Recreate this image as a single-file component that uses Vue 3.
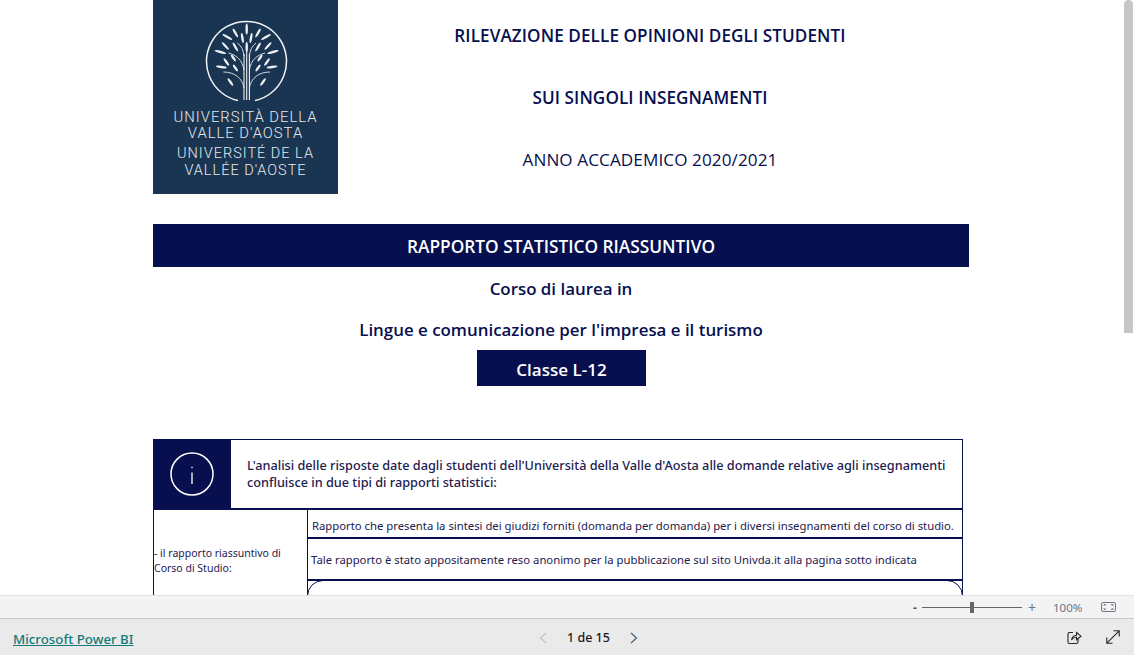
<template>
  <div class="app">
    <div class="viewport">
      <div class="report">
        <header class="top">
          <div class="logo">
            <svg class="tree" viewBox="0 0 185 110" width="185" height="110">
              <path d="M85 100.5A40 40 0 1 1 102 100.5" fill="none" stroke="#f1f3f5" stroke-width="1.5" />
              <path d="M91 100V54M93.7 100V46M96.4 100V54" stroke="#f1f3f5" stroke-width="1.1" fill="none" />
              <path v-for="b in branches" :key="b" :d="b" stroke="#e6eaee" stroke-width="0.9" fill="none" />
              <ellipse v-for="(l, i) in leaves" :key="i" :cx="l.x" :cy="l.y" rx="1.2" :ry="l.r"
                :transform="`rotate(${l.a} ${l.x} ${l.y})`" fill="#eef1f4" />
            </svg>
            <div class="logo-text">
              <div class="it">UNIVERSITÀ DELLA<br>VALLE D'AOSTA</div>
              <div class="fr">UNIVERSITÉ DE LA<br>VALLÉE D'AOSTE</div>
            </div>
          </div>
          <div class="titles">
            <div class="strong">RILEVAZIONE DELLE OPINIONI DEGLI STUDENTI</div>
            <div class="strong">SUI SINGOLI INSEGNAMENTI</div>
            <div>ANNO ACCADEMICO 2020/2021</div>
          </div>
        </header>

        <div class="banner">RAPPORTO STATISTICO RIASSUNTIVO</div>
        <div class="course">Corso di laurea in</div>
        <div class="course second">Lingue e comunicazione per l'impresa e il turismo</div>
        <div class="classe">Classe L-12</div>

        <section class="info">
          <div class="info-icon">
            <svg width="44" height="44" viewBox="0 0 44 44" fill="none" stroke="#fff">
              <circle cx="22" cy="22" r="21" stroke-width="1.5" />
              <path d="M22 20.5V32" stroke-width="1.3" />
              <circle cx="22" cy="15.5" r="0.8" fill="#fff" stroke="none" />
            </svg>
          </div>
          <p>L'analisi delle risposte date dagli studenti dell'Università della Valle d'Aosta alle domande relative agli insegnamenti confluisce in due tipi di rapporti statistici:</p>
        </section>

        <section class="details">
          <div class="label">- il rapporto riassuntivo di Corso di Studio:</div>
          <div class="rows">
            <div class="row one">Rapporto che presenta la sintesi dei giudizi forniti (domanda per domanda) per i diversi insegnamenti del corso di studio.</div>
            <div class="row two">Tale rapporto è stato appositamente reso anonimo per la pubblicazione sul sito Univda.it alla pagina sotto indicata</div>
            <div class="link-box"></div>
          </div>
        </section>
      </div>
      <div class="scrollbar"><div class="thumb"></div></div>
    </div>

    <div class="zoombar">
      <span class="minus">-</span>
      <div class="slider"><span class="knob"></span></div>
      <span class="plus">+</span>
      <span class="pct">100%</span>
      <svg class="fit" width="15" height="12" viewBox="0 0 15 12" fill="none" stroke="#6d7682">
        <rect x="0.5" y="1.5" width="14" height="9" rx="1.5" />
        <path d="M3 5V3.7H5M10 3.7H12V5M3 7V8.3H5M10 8.3H12V7" />
      </svg>
    </div>

    <footer class="footer">
      <a class="pbi" href="#">Microsoft Power BI</a>
      <div class="pager">
        <svg width="8" height="12" viewBox="0 0 8 12" fill="none" stroke="#c4c4c4" stroke-width="1.2"><path d="M7 1L1.5 6L7 11" /></svg>
        <span>1 de 15</span>
        <svg width="8" height="12" viewBox="0 0 8 12" fill="none" stroke="#3f5f7f" stroke-width="1.2"><path d="M1 1L6.5 6L1 11" /></svg>
      </div>
      <div class="actions">
        <svg width="15" height="15" viewBox="0 0 15 15" fill="none" stroke="#252525" stroke-width="1.1">
          <path d="M6 2.5H2.5A1.5 1.5 0 0 0 1 4V12A1.5 1.5 0 0 0 2.5 13.5H9.5A1.5 1.5 0 0 0 11 12V9" />
          <path d="M4.5 10C5 7 7 5.5 9.5 5.3V2.5L14 6.2L9.5 9.8V7.3C7.5 7.3 5.8 8.2 4.5 10Z" />
        </svg>
        <svg width="14" height="14" viewBox="0 0 14 14" fill="none" stroke="#252525" stroke-width="1.1">
          <path d="M0.8 13.2L13.2 0.8M7.5 0.8H13.2V6.5M0.8 7.5V13.2H6.5" />
        </svg>
      </div>
    </footer>
  </div>
</template>

<script setup>
// half of the tree's leaves, the other side is mirrored around the trunk
const half = [
  [93.7, 29, 0, 5.5],
  [93.7, 47, 0, 5],
  [98, 38, 10, 5],
  [105, 33, 30, 5],
  [113, 37, 60, 5.5],
  [105, 47, 30, 5],
  [115, 46, 42, 5],
  [120, 52, 75, 6],
  [107, 58, 35, 4],
  [114, 62, 35, 4.5],
  [119, 67, 82, 5.5],
  [105, 68, 35, 4],
  [110, 82, 35, 4.5]
]

const leaves = half.flatMap(([x, y, a, r]) =>
  x === 93.7 ? [{ x, y, a, r }] : [{ x, y, a, r }, { x: 187.4 - x, y, a: -a, r }]
)

const branches = [
  'M96.4 70C98 60 104 55 112 53',
  'M91 70C89.4 60 83.4 55 75.4 53',
  'M96.4 88C98 78 106 72 117 72',
  'M91 88C89.4 78 81.4 72 70.4 72',
  'M96.4 56C97 50 99 46 103 43',
  'M91 56C90.4 50 88.4 46 84.4 43'
]
</script>

<style>
html, body { margin: 0; overflow: hidden; }
</style>

<style scoped>
.app { width: 1134px; height: 655px; display: flex; flex-direction: column; font-family: "Noto Sans", "Open Sans", sans-serif; background: #fff; color: #070f4f; }
.viewport { flex: 1; min-height: 0; display: flex; overflow: hidden; }
.report { flex: 1; padding-left: 153px; }
.scrollbar { width: 10px; }
.thumb { width: 9px; height: 333px; background: #c6c6c6; border-radius: 5px 5px 0 0; }

.top { display: flex; width: 816px; height: 194px; }
.logo { width: 185px; height: 194px; background: #1a3551; }
.tree { display: block; }
.logo-text { text-align: center; font-family: Roboto, "Liberation Sans", sans-serif; font-weight: 300; color: #e6eaee; font-size: 14.8px; line-height: 16px; letter-spacing: 1px; margin-top: -1px; }
.fr { margin-top: 4px; font-size: 14.5px; line-height: 17px; }
.titles { width: 624px; display: flex; flex-direction: column; align-items: center; padding-top: 25px; gap: 40.7px; font-family: "Open Sans", sans-serif; font-size: 17.1px; line-height: 21.5px; letter-spacing: 0.1px; }
.strong { font-weight: 600; }

.banner { width: 816px; height: 43px; margin-top: 30px; background: #070f4f; color: #fff; font-family: "Open Sans", sans-serif; font-size: 17.3px; font-weight: 600; line-height: 46px; text-align: center; }
.course { width: 816px; margin-top: 11px; font-family: "Open Sans", sans-serif; font-size: 16.9px; font-weight: 600; line-height: 21px; text-align: center; }
.course.second { margin-top: 20px; }
.classe { width: 169px; height: 36px; margin: 10px 0 0 324px; background: #070f4f; color: #fff; font-family: "Open Sans", sans-serif; font-size: 17px; font-weight: 600; line-height: 40px; text-align: center; }

.info { width: 810px; height: 70px; margin-top: 53px; box-sizing: border-box; border: 1px solid #070f4f; border-bottom: 0; display: flex; }
.info-icon { width: 77px; flex: none; background: #070f4f; display: flex; align-items: center; justify-content: center; padding: 0 1px 1px 0; box-sizing: border-box; }
.info p { margin: 0; padding: 17px 14px 0 16px; font-size: 12.7px; font-weight: 500; line-height: 17px; color: #1d2050; }

.details { width: 810px; margin-top: -1px; box-sizing: border-box; display: flex; border-left: 1px solid #070f4f; height: 120px; }
.label { width: 153px; box-sizing: border-box; padding-top: 36px; font-size: 10.5px; line-height: 15px; color: #1d2050; border-top: 2px solid #070f4f; }
.rows { flex: 1; border-left: 1px solid #070f4f; border-right: 1px solid #070f4f; }
.row { box-sizing: border-box; font-size: 11.3px; white-space: nowrap; color: #1d2050; border-top: 2px solid #070f4f; }
.one { height: 29px; padding: 7px 0 0 4px; line-height: 17px; }
.two { padding: 12px 0 0 3px; line-height: 17px; border-bottom: 2px solid #070f4f; height: 44px; }
.link-box { height: 60px; margin: -1px -1px 0; border: 1px solid #070f4f; border-radius: 16px; }

.zoombar { height: 23px; flex: none; box-sizing: border-box; background: #f3f3f3; border-top: 1px solid #e1e1e1; display: flex; align-items: center; font-size: 12px; color: #6d7682; }
.minus { margin-left: 913px; width: 9px; font-weight: 700; color: #555; }
.slider { width: 100px; height: 1px; background: #666; position: relative; }
.knob { position: absolute; left: 48px; top: -5px; width: 4px; height: 11px; background: #666; }
.plus { margin-left: 6px; font-size: 14px; }
.pct { margin-left: 17px; font-size: 11.5px; }
.fit { margin-left: 19px; }

.footer { height: 37px; flex: none; box-sizing: border-box; background: #eaeaea; border-top: 1px solid #c8c8c8; display: flex; align-items: center; }
.pbi { margin-left: 13px; margin-top: 3px; width: 526px; font-size: 13.3px; font-weight: 500; color: #117a78; }
.pager { display: flex; align-items: center; gap: 20px; margin-top: 1px; font-size: 12.5px; font-weight: 500; color: #1a1a1a; }
.actions { margin-left: auto; margin-right: 14px; display: flex; gap: 24px; align-items: center; }
</style>
